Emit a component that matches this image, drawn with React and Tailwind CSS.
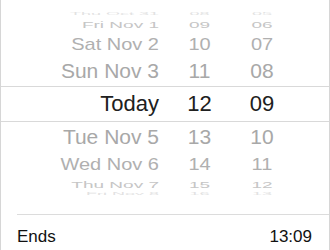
const dates = [
  "Thu Oct 31",
  "Fri Nov 1",
  "Sat Nov 2",
  "Sun Nov 3",
  "Today",
  "Tue Nov 5",
  "Wed Nov 6",
  "Thu Nov 7",
  "Fri Nov 8",
];
const hours = ["08", "09", "10", "11", "12", "13", "14", "15", "16"];
const minutes = ["05", "06", "07", "08", "09", "10", "11", "12", "13"];

// one entry per wheel row, outer rows squashed like a drum
const rows = [
  { h: "h-[4px]", t: "text-[18px] scale-y-[0.2] text-[#e2e2e2]" },
  { h: "h-[16px]", t: "text-[19px] scale-y-[0.5] text-[#c6c6c6]" },
  { h: "h-[24px]", t: "text-[20px] scale-y-[0.8] text-[#b0b0b0]" },
  { h: "h-[30px]", t: "text-[21px] scale-y-[0.93] text-[#a8a8a8]" },
  { h: "h-[36px] border-y border-[#d9d9d9]", t: "text-[22px] text-[#202020]" },
  { h: "h-[30px]", t: "text-[21px] scale-y-[0.93] text-[#a8a8a8]" },
  { h: "h-[24px]", t: "text-[20px] scale-y-[0.8] text-[#b0b0b0]" },
  { h: "h-[16px]", t: "text-[19px] scale-y-[0.5] text-[#c6c6c6]" },
  { h: "h-[4px]", t: "text-[18px] scale-y-[0.2] text-[#e2e2e2]" },
];

export default function App() {
  return (
    <div
      className="w-[330px] h-[250px] bg-white border-x border-[#d6d6d6] flex flex-col overflow-hidden"
      style={{ fontFamily: '"Liberation Sans", Arial, sans-serif' }}
    >
      <div className="h-[214px] pt-[12px] flex flex-col">
        {rows.map((r, i) => (
          <div key={i} className={`${r.h} -mx-px flex items-center`}>
            <div className="w-[159px] flex justify-end">
              <span className={`${r.t} leading-none whitespace-nowrap`}>{dates[i]}</span>
            </div>
            <div className="w-[81px] flex justify-center">
              <span className={`${r.t} leading-none`}>{hours[i]}</span>
            </div>
            <div className="w-[44px] flex justify-center">
              <span className={`${r.t} leading-none`}>{minutes[i]}</span>
            </div>
          </div>
        ))}
      </div>
      <div className="ml-4 h-px bg-[#dcdcdc]" />
      <div className="flex justify-between items-start pl-4 pr-[17px] pt-[13px] text-[17px] leading-[17px] text-[#111]">
        <span>Ends</span>
        <span>13:09</span>
      </div>
    </div>
  );
}
